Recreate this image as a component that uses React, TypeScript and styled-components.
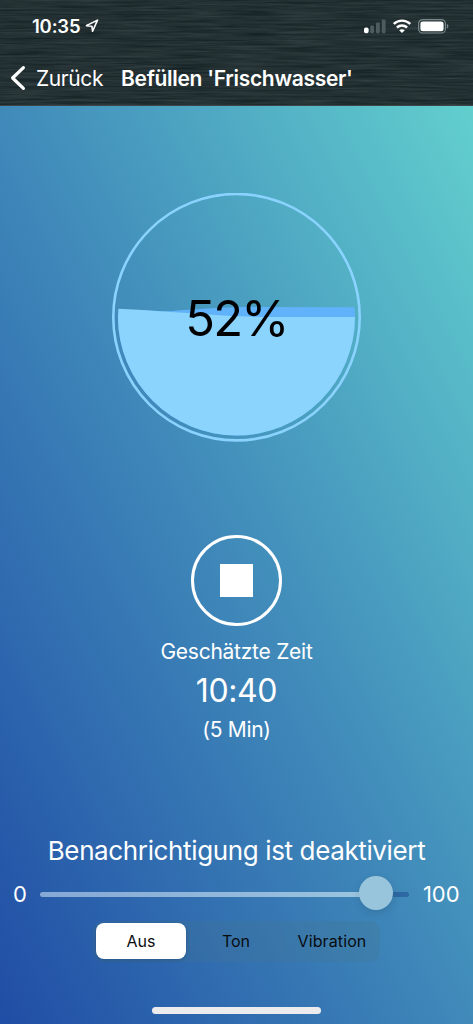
import React from "react";
import styled, { createGlobalStyle } from "styled-components";

const GlobalStyle = createGlobalStyle`
  *, *::before, *::after { box-sizing: border-box; }
  body { margin: 0; background: #214fa6; }
`;

const Screen = styled.div`
  width: 473px;
  height: 1024px;
  display: flex;
  flex-direction: column;
  overflow: hidden;
  color: #fff;
  font-family: Inter, "Liberation Sans", sans-serif;
`;

const Header = styled.header`
  position: relative;
  flex: none;
  height: 106px;
  background: #263234;
  border-bottom: 1px solid #3d4548;
`;

const BrushedMetal = styled.svg`
  position: absolute;
  inset: 0;
  width: 100%;
  height: 100%;
`;

const StatusBar = styled.div`
  position: relative;
  display: flex;
  justify-content: space-between;
  align-items: center;
  height: 52px;
  padding: 0 24px 0 32px;
`;

const StatusGroup = styled.div<{ $gap: number }>`
  display: flex;
  align-items: center;
  gap: ${(p) => p.$gap}px;
`;

const NavBar = styled.nav`
  position: relative;
  display: flex;
  align-items: center;
  height: 52px;
  padding-left: 10px;
`;

const Label = styled.span<{ $size: number; $weight?: number; $spacing?: number; $height?: number }>`
  display: block;
  font-size: ${(p) => p.$size}px;
  font-weight: ${(p) => p.$weight ?? 400};
  letter-spacing: ${(p) => p.$spacing ?? 0}px;
  line-height: ${(p) => (p.$height ? `${p.$height}px` : "normal")};
  white-space: nowrap;
`;

const BackButton = styled.button`
  display: flex;
  align-items: center;
  gap: 10px;
  width: 111px;
  padding: 0;
  border: 0;
  background: none;
  color: inherit;
  font: inherit;
`;

const Body = styled.main`
  flex: 1;
  display: flex;
  flex-direction: column;
  align-items: center;
  padding-top: 87px;
  background: linear-gradient(to top right, #204da5 0%, #408aba 50%, #62cfce 100%);
`;

const Gauge = styled.div`
  display: grid;
  width: 249px;
  height: 249px;
  place-items: center;
  > * { grid-area: 1 / 1; }
`;

const GaugeValue = styled(Label)`
  padding-top: 2px;
  color: #000;
`;

const StopButton = styled.button`
  display: grid;
  place-items: center;
  width: 91px;
  height: 91px;
  margin: 93px 0 10px;
  padding: 0;
  border: 3px solid #fff;
  border-radius: 50%;
  background: none;
`;

const StopSquare = styled.span`
  width: 33px;
  height: 33px;
  background: #fff;
`;

const Estimate = styled.section`
  display: flex;
  flex-direction: column;
  align-items: center;
  height: 195px;
`;

const SliderRow = styled.div`
  display: flex;
  align-items: center;
  width: 100%;
  height: 46px;
  padding: 0 12px 0 13px;
`;

const Track = styled.div`
  position: relative;
  width: 369px;
  height: 5px;
  margin: 1px 14px 0 13px;
  border-radius: 3px;
  background: linear-gradient(to right, #86a8d5 0, #9bc5df 336px, #2d68a3 336px);
`;

const Thumb = styled.span`
  position: absolute;
  left: 319px;
  top: -16px;
  width: 34px;
  height: 34px;
  border-radius: 50%;
  background: #99c5dc;
  box-shadow: 0 3px 8px rgba(0, 0, 0, 0.12);
`;

const Segments = styled.div`
  display: grid;
  grid-template-columns: 93px 96px 96px;
  width: 287px;
  height: 41px;
  margin-top: 4px;
  padding: 2px;
  border-radius: 10px;
  background: rgba(70, 120, 145, 0.28);
`;

const Segment = styled.button<{ $active?: boolean; $divided?: boolean }>`
  position: relative;
  display: grid;
  place-items: center;
  margin: ${(p) => (p.$active ? "0 2px 1px 1px" : "0 0 1px")};
  padding: 0;
  border: 0;
  border-radius: 8px;
  background: ${(p) => (p.$active ? "#fff" : "none")};
  box-shadow: ${(p) => (p.$active ? "0 1px 4px rgba(0,0,0,.18)" : "none")};
  color: #080c10;
  font: inherit;
  &::before {
    content: "";
    display: ${(p) => (p.$divided ? "block" : "none")};
    position: absolute;
    left: -2px;
    top: 10px;
    width: 1px;
    height: 18px;
    background: rgba(80, 110, 150, 0.35);
  }
`;

const HomeIndicator = styled.div`
  width: 169px;
  height: 7px;
  margin-top: 45px;
  border-radius: 4px;
  background: #ececee;
`;

const LocationIcon = () => (
  <svg width="14" height="14" viewBox="0 0 14 14" fill="none" stroke="#fff" strokeWidth="1.6" strokeLinejoin="round">
    <path d="M12.5 1.1 1.4 6.6 6.9 7.2 7.6 12.3Z" />
  </svg>
);

const SignalIcon = () => (
  <svg width="22" height="15" viewBox="0 0 22 15">
    <rect x="0" y="8.6" width="4.6" height="5.6" rx="1.7" fill="#fff" />
    <rect x="6.2" y="6.5" width="3.8" height="7.7" rx="1.2" fill="#4f5c5f" />
    <rect x="12" y="3.6" width="3.8" height="10.6" rx="1.2" fill="#4f5c5f" />
    <rect x="17.8" y="0.6" width="3.8" height="13.6" rx="1.2" fill="#4f5c5f" />
  </svg>
);

const WifiIcon = () => (
  <svg width="18" height="15" viewBox="0 0 18 15" fill="none" stroke="#fff" strokeWidth="2.4">
    <path d="M.8 5C5.4.5 12.6.5 17.2 5" />
    <path d="M3.9 8.5C6.8 5.8 11.2 5.8 14.1 8.5" />
    <path d="M6.2 11.2C7.8 9.9 10.2 9.9 11.8 11.2L9 14.1Z" fill="#fff" stroke="none" />
  </svg>
);

const BatteryIcon = () => (
  <svg width="31" height="15" viewBox="0 0 31 15">
    <rect x=".6" y=".6" width="26.8" height="13.4" rx="4" fill="none" stroke="#78868a" strokeWidth="1.2" />
    <rect x="2.4" y="2.4" width="23.2" height="9.9" rx="2.4" fill="#fff" />
    <path d="M28.8 5v4.6c1-.4 1.6-1.2 1.6-2.3s-.6-1.9-1.6-2.3Z" fill="#78868a" />
  </svg>
);

const ChevronIcon = () => (
  <svg width="16" height="26" viewBox="0 0 16 26" fill="none" stroke="#fff" strokeWidth="3.2" strokeLinecap="round" strokeLinejoin="round">
    <path d="M13.4 2.6 2.6 13 13.4 23.4" />
  </svg>
);

const WaterLevel = () => (
  <svg width="249" height="249" viewBox="0 0 249 249">
    <defs>
      <clipPath id="tank">
        <circle cx="124.5" cy="124" r="118.5" />
      </clipPath>
    </defs>
    <circle cx="124.5" cy="124.2" r="123.2" fill="none" stroke="#8bd3ff" strokeWidth="2.6" />
    <g clipPath="url(#tank)">
      <path d="M0 122C60 119 90 114 145 114L249 114.3V249H0Z" fill="#60b2fb" />
      <path d="M0 115.5C65 118.3 110 124 160 124H249V249H0Z" fill="#8bd4fe" />
    </g>
  </svg>
);

export default function App() {
  return (
    <Screen>
      <GlobalStyle />
      <Header>
        <BrushedMetal aria-hidden="true">
          <filter id="brushed" x="0" y="0" width="100%" height="100%" colorInterpolationFilters="sRGB">
            <feTurbulence type="fractalNoise" baseFrequency="0.018 0.5" numOctaves="3" seed="8" />
            <feColorMatrix values="0.18 0 0 0 0.05  0.18 0 0 0 0.1  0.18 0 0 0 0.11  0 0 0 0 1" />
          </filter>
          <rect width="100%" height="100%" filter="url(#brushed)" opacity="0.85" />
        </BrushedMetal>
        <StatusBar>
          <StatusGroup $gap={5}>
            <Label $size={18.5} $weight={600} $spacing={-0.2}>10:35</Label>
            <LocationIcon />
          </StatusGroup>
          <StatusGroup $gap={7}>
            <SignalIcon />
            <WifiIcon />
            <BatteryIcon />
          </StatusGroup>
        </StatusBar>
        <NavBar>
          <BackButton>
            <ChevronIcon />
            <Label $size={21} $spacing={-0.4}>Zurück</Label>
          </BackButton>
          <Label $size={21} $weight={600} $spacing={-0.3}>Befüllen 'Frischwasser'</Label>
        </NavBar>
      </Header>
      <Body>
        <Gauge>
          <WaterLevel />
          <GaugeValue $size={49} $spacing={-1.8}>52%</GaugeValue>
        </Gauge>
        <StopButton aria-label="Stopp">
          <StopSquare />
        </StopButton>
        <Estimate>
          <Label $size={21} $height={32} $spacing={-0.25}>Geschätzte Zeit</Label>
          <Label $size={32} $height={46} $spacing={-0.4}>10:40</Label>
          <Label $size={21} $height={32} $spacing={-0.3}>(5 Min)</Label>
        </Estimate>
        <Label $size={26} $height={40} $spacing={-0.37}>Benachrichtigung ist deaktiviert</Label>
        <SliderRow>
          <Label $size={22}>0</Label>
          <Track>
            <Thumb />
          </Track>
          <Label $size={22}>100</Label>
        </SliderRow>
        <Segments>
          <Segment $active><Label $size={16}>Aus</Label></Segment>
          <Segment><Label $size={16}>Ton</Label></Segment>
          <Segment $divided><Label $size={16} $spacing={0.1}>Vibration</Label></Segment>
        </Segments>
        <HomeIndicator />
      </Body>
    </Screen>
  );
}
